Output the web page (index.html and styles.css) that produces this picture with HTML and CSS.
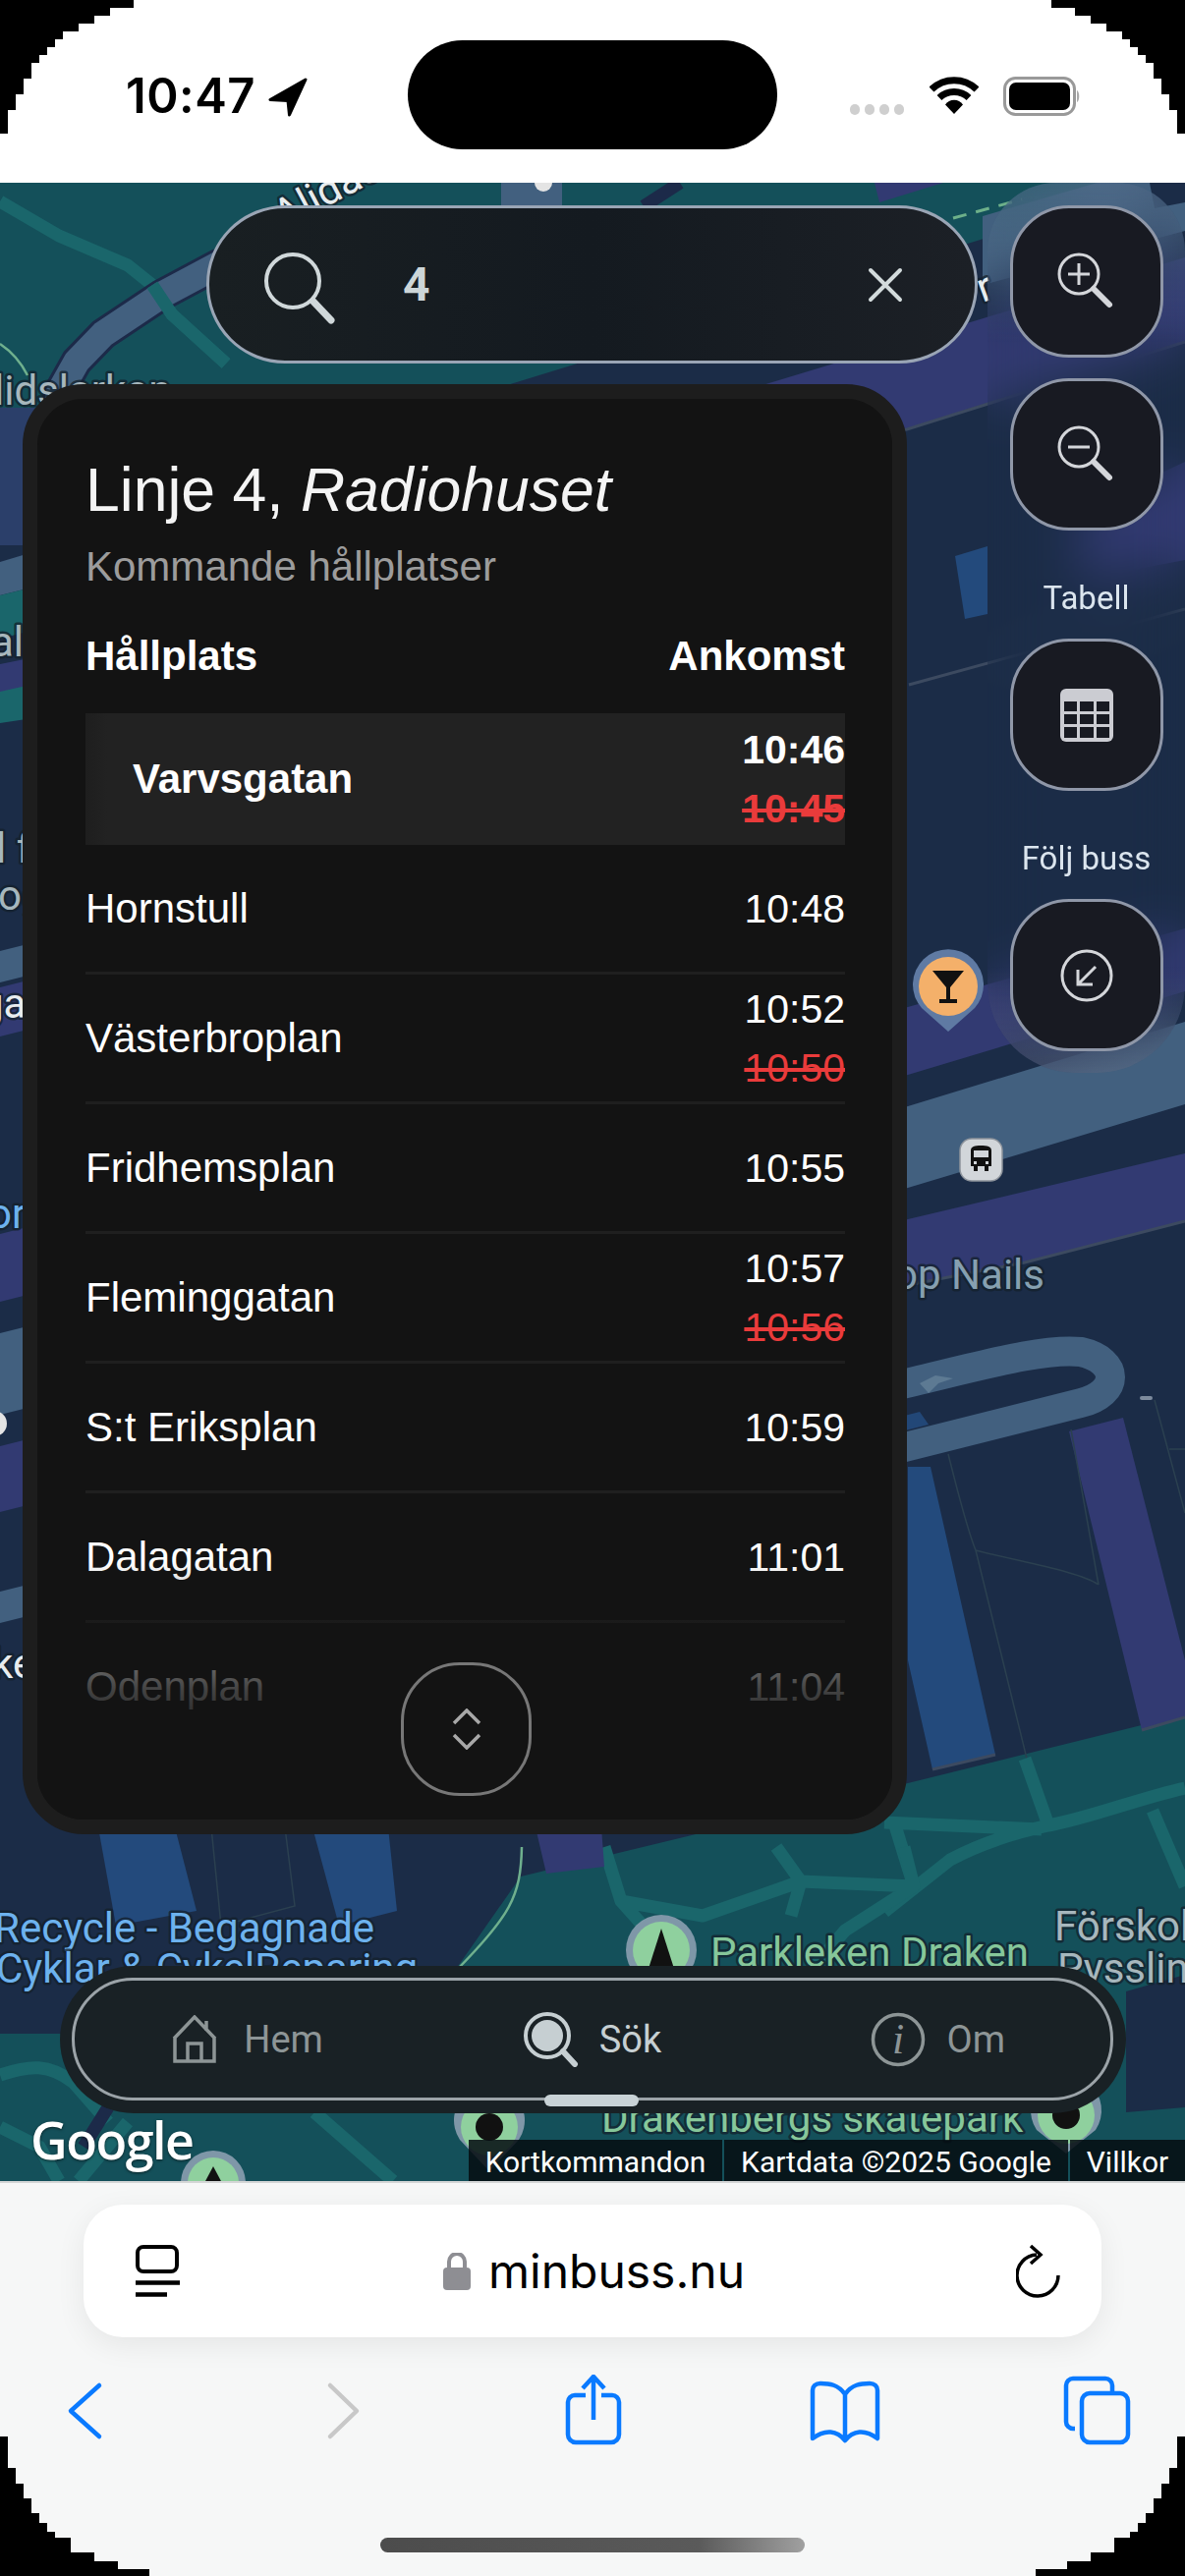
FILE: index.html
```html
<!DOCTYPE html>
<html lang="sv">
<head>
<meta charset="utf-8">
<title>Min Buss</title>
<link rel="stylesheet" href="styles.css">
</head>
<body>
<div class="phone">
  <header class="status">
    <div class="status-left">
      <span class="clock">10:47</span>
      <svg class="loc" width="40" height="40" viewBox="0 0 40 40"><path d="M38 2 2 22.5 20 23.500 21.500 38Z" fill="#000" stroke="#000" stroke-width="3" stroke-linejoin="round"/></svg>
    </div>
    <div class="island"></div>
    <div class="status-right">
      <div class="dots"><i></i><i></i><i></i><i></i></div>
      <svg class="wifi" width="50" height="38" viewBox="0 0 50 38"><path d="M2 13A33 33 0 0 1 48 13" fill="none" stroke="#000" stroke-width="7"/><path d="M10 21.500A22 22 0 0 1 40 21.500" fill="none" stroke="#000" stroke-width="7"/><path d="M16 28.500A11 11 0 0 1 34 28.500L25 38Z" fill="#000"/></svg>
      <svg class="batt" width="80" height="40" viewBox="0 0 80 40"><rect x="1.500" y="1.500" width="71" height="37" rx="11" fill="none" stroke="#999" stroke-width="3"/><rect x="6" y="6" width="62" height="28" rx="7" fill="#000"/><path d="M75 14C78 15 78 25 75 26Z" fill="#aaa"/></svg>
    </div>
  </header>

  <main class="map">
    <svg class="map-art" width="1206" height="2034" viewBox="0 186 1206 2034">
      <rect class="f-park" x="0" y="186" width="1206" height="2034"/>
      <polygon class="f-navy" points="0,420 490,400 1206,180 1206,1745 924,1815 530,1910 460,2010 430,2070 0,2070"/>
      <polygon class="f-navy" points="1146,2027 1206,2010 1206,2145 1146,2150"/>
      <polygon class="f-purple" points="890,186 960,186 895,206"/>
      <polygon class="f-hatch" points="0,415 60,415 40,555 0,555"/>
      <polygon class="f-road" points="0,572 40,560 40,596 0,606"/>
      <polygon class="f-path" points="0,606 40,596 40,640 0,650"/>
      <polygon class="f-purple" points="0,676 40,668 40,700 0,712"/>
      <polygon class="f-path" points="0,704 40,695 40,730 0,736"/>
      <polygon class="f-road" points="0,968 40,958 40,990 0,1000"/>
      <polygon class="f-purple" points="0,1005 40,995 40,1045 0,1055"/>
      <path class="s-path" d="M0 205 60 240 130 270 155 290 175 320 230 370"/>
      <path class="s-road-edge" d="M40 560 60 400 78 368 105 340 165 300 225 268"/>
      <path class="s-road" d="M40 560 60 400 78 368 105 340 165 300 225 268"/>
      <path class="s-path" d="M155 290 175 320 230 370"/>
      <path class="s-thin" d="M0 350C12 358 22 370 28 382"/>
      <rect class="f-road" x="510" y="186" width="62" height="24"/>
      <path class="s-dark" d="M692 186 655 210"/>
      <circle class="f-white" cx="553" cy="186" r="9"/>
      <text class="lbl lbl-white" transform="translate(288 234) rotate(-28)">Alidas</text>
      <path class="s-dash" d="M970 222 1040 203"/>
      <polygon class="f-road" points="1000,220 1206,160 1206,235 1000,290"/>
      <polygon class="f-navy" points="1170,186 1206,186 1206,206 1175,212"/>
      <polygon class="f-purple" points="650,430 1206,262 1206,347 923,436 700,470"/>
      <polygon class="f-purple" points="1100,520 1206,470 1206,570 1100,590"/>
      <path class="s-edge" d="M700 470 923 437 1206 348"/>
      <polygon class="f-blue" points="972,566 1005,556 1005,625 982,630"/>
      <path class="s-edge" d="M925 697 1206 620"/>
      <polygon class="f-purple" points="0,1256 924,1025 1206,945 1206,1009 924,1094 0,1325"/>
      <polygon class="f-road" points="0,1357 924,1126 1206,1040 1206,1124 924,1209 0,1440"/>
      <polygon class="f-purple" points="0,1472 924,1241 1206,1174 1206,1243 1043,1285 924,1308 0,1539"/>
      <path class="s-edge" d="M924 1308 1043 1285 1206 1243"/>
      <polygon class="f-road" points="0,1620 40,1610 40,1642 0,1652"/>
      <path class="s-uroad" d="M905 1477 1100 1428C1140 1418 1140 1385 1100 1376 1060 1372 1000 1390 905 1412"/>
      <polygon class="f-blue" points="905,1445 936,1437 945,1450 905,1460" opacity=".9"/>
      <polygon class="f-blue" points="924,1493 947,1493 1013,1786 949,1801 924,1690"/>
      <path class="s-edge" d="M949 1801 1013 1786"/>
      <polygon class="f-purple" points="1088,1457 1143,1443 1206,1690 1206,1747 1162,1761"/>
      <path class="s-edge" d="M1162 1761 1206 1748"/>
      <path class="s-faint" d="M965 1480C985 1560 990 1570 993 1578 1040 1590 1100 1600 1118 1613M993 1578 1045 1790M1090 1455 1118 1613M1175 1425 1206 1540M1190 1475H1206"/>
      <rect class="f-pale" x="1160" y="1421" width="13" height="4" rx="2"/>
      <polygon class="f-pale2" points="936,1408 952,1400 970,1403 955,1408 945,1418"/>
      <!-- park paths -->
      <path class="s-path" d="M900 1946 967 1893C1000 1875 1035 1865 1067 1858 1110 1850 1160 1830 1206 1820M1043 1790 1067 1858M1173 1843 1206 1920M900 1855 1060 1862M910 1855 930 1920"/>
      <path class="s-path" d="M615 1880 632 1935 690 2000M790 1880 815 1915 805 1950M920 1880 930 1920 860 1965 830 2000M632 1935 715 1950 815 1915 930 1920"/>
      <path class="s-path" d="M0 2112C30 2102 50 2100 75 2120L110 2160M0 2165 40 2185 60 2220M320 2150 400 2220M130 2160 80 2220"/>
      <path class="s-dark" d="M110 2145 85 2185"/>
      <path class="s-thin" d="M531 1880C530 1930 520 1950 460 2010"/>
      <!-- buildings -->
      <polygon class="f-blue" points="100,1860 178,1860 200,1945 118,1960"/>
      <polygon class="f-blue" points="318,1860 395,1860 404,1945 345,1960"/>
      <polygon class="f-purple" points="545,1860 612,1860 615,1900 556,1907"/>
      <path class="s-faint" d="M215 1860 225 1960 300 1940 290 1860"/>
      <!-- pins -->
      <g>
        <path class="f-halo" d="M965 1050 938 1026A36 36 0 1 1 992 1026Z"/>
        <circle class="f-orange" cx="965" cy="1004" r="30"/>
        <path class="f-ink" d="M949 988H981L967 1005V1017H974V1021H956V1017H963V1005Z"/>
      </g>
      <g>
        <rect class="f-chip" x="977" y="1159" width="43" height="43" rx="12"/>
        <path class="f-ink" d="M988 1171C988 1167 992 1166 998 1166 1005 1166 1009 1167 1009 1171V1187H1006V1192H1002V1187H995V1192H991V1187H988ZM991 1171V1178H1006V1171ZM991 1182V1185H994V1182ZM1003 1182V1185H1006V1182Z" fill-rule="evenodd"/>
      </g>
      <g>
        <circle class="f-halo2" cx="673" cy="1985" r="36"/><circle class="f-green" cx="673" cy="1985" r="29"/>
        <path class="f-ink" d="M673 1963 688 2010H658Z"/>
      </g>
      <g>
        <path class="f-halo2" d="M498 2210 468 2178A36 36 0 1 1 528 2178Z"/>
        <circle class="f-green" cx="498" cy="2165" r="29"/><circle class="f-ink" cx="498" cy="2165" r="14"/>
      </g>
      <g>
        <path class="f-halo2" d="M1085 2192 1055 2168A36 36 0 1 1 1115 2168Z"/>
        <circle class="f-green" cx="1085" cy="2153" r="29"/><circle class="f-ink" cx="1085" cy="2153" r="14"/>
      </g>
      <g>
        <circle class="f-halo2" cx="217" cy="2222" r="33"/><circle class="f-green" cx="217" cy="2222" r="26"/>
        <path class="f-ink" d="M217 2205 226 2222H208Z"/>
      </g>
      <!-- labels -->
      <text class="lbl lbl-grey" x="-6" y="412">lidslarkan</text>
      <text class="lbl lbl-grey" x="-9" y="668">al</text>
      <text class="lbl lbl-grey" x="-4" y="878">l f</text>
      <text class="lbl lbl-grey" x="-2" y="926">og</text>
      <text class="lbl lbl-white" x="-20" y="1036">ga</text>
      <text class="lbl lbl-blue" x="-12" y="1250">or</text>
      <circle class="f-white" cx="-6" cy="1449" r="13"/>
      <text class="lbl lbl-white" x="-8" y="1708">ke</text>
      <text class="lbl lbl-dim" x="1063" y="1312" text-anchor="end">Top Nails</text>
      <text class="lbl lbl-grey" x="1073" y="1975">Förskola</text>
      <text class="lbl lbl-grey" x="1076" y="2018">Pysslingen</text>
      <text class="lbl lbl-blue" x="-6" y="1977">Recycle - Begagnade</text>
      <text class="lbl lbl-blue" x="-4" y="2018">Cyklar &amp; CykelReparing</text>
      <text class="lbl lbl-green" x="723" y="2002">Parkleken Draken</text>
      <text class="lbl lbl-green" x="612" y="2170">Drakenbergs skatepark</text>
      <text class="lbl lbl-white" x="1000" y="308" transform="rotate(-20 1000 308)">r</text>
    </svg>

    <div class="search">
      <svg class="search-ico" width="74" height="74" viewBox="0 0 74 74"><circle cx="30" cy="30" r="27" fill="none" stroke="#d0d8da" stroke-width="4"/><path d="M51 51 69 70" stroke="#d0d8da" stroke-width="7" stroke-linecap="round"/></svg>
      <span class="search-val">4</span>
      <svg class="search-x" width="36" height="36" viewBox="0 0 36 36"><path d="M3 3 33 33M33 3 3 33" stroke="#d3dbdc" stroke-width="4" stroke-linecap="round"/></svg>
    </div>

    <aside class="tools">
      <button class="tool"><svg width="60" height="60" viewBox="0 0 60 60"><circle cx="22" cy="22" r="20" fill="none" stroke="#d4d6da" stroke-width="3"/><path d="M22 11V33M11 22H33" stroke="#d4d6da" stroke-width="3"/><path d="M37 37 53 53" stroke="#d4d6da" stroke-width="6" stroke-linecap="round"/></svg></button>
      <button class="tool tool-gap"><svg width="60" height="60" viewBox="0 0 60 60"><circle cx="22" cy="22" r="20" fill="none" stroke="#d4d6da" stroke-width="3"/><path d="M11 22H33" stroke="#d4d6da" stroke-width="3"/><path d="M37 37 53 53" stroke="#d4d6da" stroke-width="6" stroke-linecap="round"/></svg></button>
      <div class="tool-label">Tabell</div>
      <button class="tool"><svg width="54" height="54" viewBox="0 0 54 54"><rect width="54" height="54" rx="6" fill="#cbccd2"/><g fill="#181a22"><rect x="4" y="13" width="13" height="10"/><rect x="20" y="13" width="14" height="10"/><rect x="37" y="13" width="13" height="10"/><rect x="4" y="26" width="13" height="10"/><rect x="20" y="26" width="14" height="10"/><rect x="37" y="26" width="13" height="10"/><rect x="4" y="39" width="13" height="11"/><rect x="20" y="39" width="14" height="11"/><rect x="37" y="39" width="13" height="11"/></g></svg></button>
      <div class="tool-label">Följ buss</div>
      <button class="tool"><svg width="54" height="54" viewBox="0 0 54 54"><circle cx="27" cy="27" r="25" fill="none" stroke="#d4d6da" stroke-width="3"/><path d="M36 18 19 35M18 21V36H33" fill="none" stroke="#d4d6da" stroke-width="3"/></svg></button>
    </aside>

    <section class="card">
      <h1 class="card-title">Linje 4, <em>Radiohuset</em></h1>
      <p class="card-sub">Kommande hållplatser</p>
      <div class="card-head"><span>Hållplats</span><span>Ankomst</span></div>
      <ul class="stops">
        <li class="stop stop-now"><span>Varvsgatan</span><span class="times"><span>10:46</span><s>10:45</s></span></li>
        <li class="stop"><span>Hornstull</span><span class="times"><span>10:48</span></span></li>
        <li class="stop"><span>Västerbroplan</span><span class="times"><span>10:52</span><s>10:50</s></span></li>
        <li class="stop"><span>Fridhemsplan</span><span class="times"><span>10:55</span></span></li>
        <li class="stop"><span>Fleminggatan</span><span class="times"><span>10:57</span><s>10:56</s></span></li>
        <li class="stop"><span>S:t Eriksplan</span><span class="times"><span>10:59</span></span></li>
        <li class="stop"><span>Dalagatan</span><span class="times"><span>11:01</span></span></li>
        <li class="stop"><span>Odenplan</span><span class="times"><span>11:04</span></span></li>
      </ul>
      <div class="fade"></div>
      <button class="scroll"><svg width="30" height="42" viewBox="0 0 30 42"><path d="M2 15 15 2 28 15M2 27 15 40 28 27" fill="none" stroke="#a8a8a8" stroke-width="3.500"/></svg></button>
    </section>

    <nav class="nav">
      <div class="nav-inner">
        <a class="nav-item">
          <svg width="48" height="50" viewBox="0 0 48 50"><path d="M3 24 24 2 45 24M4 23V47H44V23M17 47V29H31V47M36 6V16" fill="none" stroke="#8d9596" stroke-width="3.500"/></svg>
          <span>Hem</span>
        </a>
        <a class="nav-item nav-on">
          <svg width="56" height="56" viewBox="0 0 56 56"><circle cx="24" cy="24" r="22" fill="none" stroke="#c6cfd2" stroke-width="4"/><circle cx="24" cy="24" r="16" fill="#c6cfd2"/><path d="M40 40 52 53" stroke="#c6cfd2" stroke-width="6" stroke-linecap="round"/></svg>
          <span>Sök</span>
        </a>
        <a class="nav-item nav-om">
          <svg width="56" height="56" viewBox="0 0 56 56"><circle cx="28" cy="28" r="25.500" fill="none" stroke="#8d9596" stroke-width="3.500"/><text class="info-i" x="28" y="42" text-anchor="middle">i</text></svg>
          <span>Om</span>
        </a>
        <div class="nav-pill"></div>
      </div>
    </nav>

    <div class="google">Google</div>
    <div class="attrib"><span class="a1">Kortkommandon</span><span class="a2">Kartdata ©2025 Google</span><span class="a3">Villkor</span></div>
  </main>

  <footer class="safari">
    <div class="url">
      <svg width="46" height="54" viewBox="0 0 46 54"><rect x="3" y="2" width="40" height="25" rx="6" fill="none" stroke="#000" stroke-width="4"/><path d="M1 38.500H46M1 50.500H33" stroke="#000" stroke-width="4.500"/></svg>
      <div class="url-mid">
        <svg width="28" height="38" viewBox="0 0 28 38"><path d="M6 16V9A8 8 0 0 1 22 9V16" fill="none" stroke="#8e8e93" stroke-width="4"/><rect y="15" width="28" height="23" rx="4" fill="#8e8e93"/></svg>
        <span>minbuss.nu</span>
      </div>
      <svg width="46" height="56" viewBox="0 0 46 56"><path d="M21 11A21 21 0 1 0 43 32" fill="none" stroke="#000" stroke-width="3.500"/><path d="M15 2 25 11 15 20" fill="none" stroke="#000" stroke-width="3.500"/></svg>
    </div>
    <div class="toolbar">
      <svg width="80" height="72" viewBox="0 0 80 72"><path d="M55 11 26 37 55 63" fill="none" stroke="#0a7aff" stroke-width="4.500" stroke-linecap="round" stroke-linejoin="round"/></svg>
      <svg width="80" height="72" viewBox="0 0 80 72"><path d="M26 11 53 37 26 63" fill="none" stroke="#c8c8c8" stroke-width="4.500" stroke-linecap="round" stroke-linejoin="round"/></svg>
      <svg width="80" height="72" viewBox="0 0 80 72"><path d="M32 21H21A7 7 0 0 0 14 28V61A8 8 0 0 0 22 69H58A8 8 0 0 0 66 61V28A7 7 0 0 0 59 21H48M40 46V2M29 14 40 2 51 14" fill="none" stroke="#0a7aff" stroke-width="4.500"/></svg>
      <svg width="80" height="72" viewBox="0 0 80 72"><path d="M40 20C33 10 24 9 15 9 10 9 7 12 7 16V65C20 55 32 57 40 67 48 57 60 55 73 65V16C73 12 70 9 65 9 56 9 47 10 40 20ZM40 20V67" fill="none" stroke="#0a7aff" stroke-width="4.500" stroke-linejoin="round"/></svg>
      <svg width="80" height="72" viewBox="0 0 80 72"><path d="M14 55H12A7 7 0 0 1 5 48V11A7 7 0 0 1 12 4H45A7 7 0 0 1 52 11V19" fill="none" stroke="#0a7aff" stroke-width="4.500"/><rect x="21" y="19" width="47" height="50" rx="8" fill="none" stroke="#0a7aff" stroke-width="4.500"/></svg>
    </div>
    <div class="homebar"></div>
  </footer>

  <svg class="corners" width="1206" height="2622" viewBox="0 0 1206 2622" shape-rendering="crispEdges">
    <path d="M0 0H136V8H112V16H96V24H80V32H64V40H56V48H48V56H40V64H32V80H24V96H16V112H8V136H0Z"/>
    <path d="M0 0H136V8H112V16H96V24H80V32H64V40H56V48H48V56H40V64H32V80H24V96H16V112H8V136H0Z" transform="matrix(-1 0 0 1 1206 0)"/>
    <path d="M0 2622V2480H8V2512H16V2528H24V2543H32V2558H40V2568H48V2577H56V2583H72V2598H96V2607H120V2615H152V2622Z"/>
    <path d="M0 2622V2480H8V2512H16V2528H24V2543H32V2558H40V2568H48V2577H56V2583H72V2598H96V2607H120V2615H152V2622Z" transform="matrix(-1 0 0 1 1206 0)"/>
  </svg>
</div>
</body>
</html>
```
FILE: styles.css
```css
* { box-sizing: border-box; }
html, body { margin: 0; padding: 0; background: #000; }
body { width: 1206px; height: 2622px; overflow: hidden; }
button { padding: 0; font: inherit; color: inherit; background: none; }
ul, h1, p { margin: 0; padding: 0; }
li { list-style: none; }

.phone { position: relative; width: 1206px; height: 2622px; display: flex; flex-direction: column; overflow: hidden; font-family: "Liberation Sans", Arial, sans-serif; }
.corners { position: absolute; left: 0; top: 0; pointer-events: none; fill: #000; }

/* status bar */
.status { height: 186px; flex: none; background: #fff; display: flex; }
.status-left { width: 415px; padding: 73px 0 0 128px; display: flex; align-items: flex-start; gap: 13px; }
.clock { font-family: Inter, sans-serif; font-weight: 600; font-size: 49px; line-height: 50px; letter-spacing: .5px; color: #000; }
.loc { margin-top: 6px; }
.island { width: 376px; height: 111px; margin-top: 41px; border-radius: 56px; background: #000; }
.status-right { flex: 1; padding: 78px 0 0 74px; display: flex; align-items: flex-start; }
.dots { display: flex; gap: 5px; margin-top: 28px; width: 81px; }
.dots i { width: 10px; height: 11px; border-radius: 5px; background: #cfcfcf; }
.batt { margin-left: 24px; width: 82px; }

/* map */
.map { position: relative; flex: none; height: 2034px; overflow: hidden; background: #14505a; }
.map-art { position: absolute; left: 0; top: 0; }
.f-park { fill: #14505a; }
.f-navy { fill: #1b2c47; }
.f-purple { fill: #323a72; }
.f-blue { fill: #234a7c; }
.f-road { fill: #42607f; }
.f-hatch { fill: #2b3f6a; }
.f-path { fill: #1a666b; }
.f-white { fill: #e4e4e4; }
.f-pale { fill: #7d8b9d; }
.f-pale2 { fill: #5d7a93; }
.f-halo { fill: #5f7aa3; }
.f-halo2 { fill: #7f97a8; }
.f-orange { fill: #f4b06a; }
.f-green { fill: #8fd09e; }
.f-ink { fill: #111; }
.f-chip { fill: #d2d6da; stroke: #8e949c; stroke-width: 1.5; }
.s-path { fill: none; stroke: #1a666b; stroke-width: 13; stroke-linejoin: round; }
.s-road { fill: none; stroke: #42607f; stroke-width: 27; stroke-linejoin: round; }
.s-road-edge { fill: none; stroke: #1c2a49; stroke-width: 33; stroke-linejoin: round; }
.s-uroad { fill: none; stroke: #42607f; stroke-width: 30; stroke-linejoin: round; }
.s-thin { fill: none; stroke: #6fb08e; stroke-width: 2.500; }
.s-dark { fill: none; stroke: #1c2a49; stroke-width: 13; }
.s-dash { fill: none; stroke: #6db08a; stroke-width: 3; stroke-dasharray: 14 10; }
.s-edge { fill: none; stroke: #3c4a60; stroke-width: 3; }
.s-faint { fill: none; stroke: #2b4050; stroke-width: 1.500; }
.lbl { font-family: Roboto, sans-serif; font-size: 42px; paint-order: stroke; stroke: #13202c; stroke-width: 5px; stroke-opacity: .75; stroke-linejoin: round; }
.lbl-grey { fill: #a7b7bd; }
.lbl-dim { fill: #86a0b0; }
.lbl-white { fill: #e8ecee; }
.lbl-blue { fill: #6db2ee; }
.lbl-green { fill: #86c79a; }

/* search */
.search { position: absolute; left: 210px; top: 23px; width: 785px; height: 161px; border: 3px solid #9aa5b5; border-radius: 80px; background: linear-gradient(90deg, #191f22, #141a20 50%, #1c2026); display: flex; align-items: center; padding: 0 73px 0 55px; }
.search-ico { margin-top: 6px; }
.search-val { margin-left: 68px; font-family: Roboto, sans-serif; font-weight: 700; font-size: 48px; color: #cdd6d8; }
.search-x { margin-left: auto; }

/* side tools */
.tools { position: absolute; left: 1005px; top: 0; width: 201px; height: 906px; border-radius: 70px 70px 90px 90px; padding-top: 23px; display: flex; flex-direction: column; align-items: center; backdrop-filter: blur(26px); background: linear-gradient(180deg, rgba(90, 115, 145, .45), rgba(90, 115, 145, 0) 18%, rgba(110, 120, 140, 0) 88%, rgba(130, 130, 150, .28)); }
.tool { width: 156px; height: 155px; flex: none; border: 3px solid #8f97a8; border-radius: 60px; background: #181a22; display: flex; align-items: center; justify-content: center; }
.tool-gap { margin-top: 21px; }
.tool-label { height: 110px; padding-top: 49px; text-align: center; font-family: Roboto, sans-serif; font-size: 33px; line-height: 40px; color: #dbe5ee; }

/* card */
.card { position: absolute; left: 23px; top: 205px; width: 900px; height: 1476px; border: 15px solid #1d1d1d; border-radius: 62px; background: #131313; padding: 57px 48px 0 49px; overflow: hidden; color: #fff; }
.card-title { font-weight: 400; font-size: 62.500px; line-height: 70px; color: #f4f4f4; }
.card-sub { margin-top: 19px; font-size: 42px; line-height: 50px; color: #9c9c9c; }
.card-head { margin-top: 41px; display: flex; justify-content: space-between; font-weight: 700; font-size: 42px; line-height: 50px; }
.stops { margin-top: 33px; }
.stop { height: 132px; display: flex; justify-content: space-between; align-items: center; font-size: 42px; line-height: 50px; border-bottom: 3px solid #1f1f1f; }
.stop-now { height: 134px; font-weight: 700; padding-left: 48px; border-bottom: 0; background: linear-gradient(90deg, #1e1e1e, #222 22px); }
.times { display: flex; flex-direction: column; align-items: flex-end; font-size: 41px; line-height: 60px; }
.times s { color: #ea3b3b; }
.fade { position: absolute; left: 0; right: 0; bottom: 0; height: 263px; background: linear-gradient(180deg, rgba(19, 19, 19, 0), rgba(19, 19, 19, .8) 50%, #131313 72%); }
.scroll { position: absolute; left: 370px; top: 1286px; width: 133px; height: 136px; border: 3px solid #777; border-radius: 60px; display: flex; align-items: center; justify-content: center; }

/* nav */
.nav { position: absolute; left: 61px; top: 1815px; width: 1085px; height: 150px; border-radius: 75px; background: #192125; padding: 12px 13px 13px 12px; }
.nav-inner { position: relative; height: 125px; border: 3.500px solid #9ba3a8; border-radius: 62px; display: grid; grid-template-columns: repeat(3, 1fr); }
.nav-item { display: flex; align-items: center; justify-content: center; gap: 26px; padding-top: 1px; font-family: Roboto, sans-serif; font-size: 38px; color: #8d9596; }
.nav-on { color: #c6cfd2; gap: 21px; }
.nav-om { gap: 22px; }
.info-i { font-family: "Liberation Serif", serif; font-style: italic; font-size: 44px; fill: #8d9596; }
.nav-pill { position: absolute; left: 478px; bottom: -9px; width: 96px; height: 12px; border-radius: 6px; background: #c8d2d6; }

/* attribution */
.google { position: absolute; left: 31px; top: 1960px; font-family: "Open Sans", sans-serif; font-weight: 600; font-size: 52px; line-height: 64px; letter-spacing: -1.500px; color: #fff; text-shadow: 0 1px 3px rgba(0, 0, 0, .6); }
.attrib { position: absolute; right: 0; bottom: 0; height: 42px; display: flex; gap: 2px; font-family: Roboto, sans-serif; font-size: 30px; line-height: 45px; color: #fff; }
.attrib span { background: rgba(5, 12, 16, .85); text-align: center; }
.a1 { width: 258px; }
.a2 { width: 350px; }
.a3 { width: 117px; }

/* safari */
.safari { flex: 1; background: #f6f7f7; border-top: 2px solid #d4d6d6; padding-top: 22px; display: flex; flex-direction: column; align-items: center; }
.url { width: 1036px; height: 135px; flex: none; border-radius: 40px; background: #fff; box-shadow: 0 8px 30px rgba(0, 0, 0, .07); display: flex; align-items: center; justify-content: space-between; padding: 0 41px 0 52px; }
.url-mid { display: flex; align-items: center; gap: 18px; margin-left: -8px; font-family: Inter, sans-serif; font-size: 48px; line-height: 56px; color: #000; }
.toolbar { align-self: stretch; margin-top: 38px; padding-left: 46px; display: grid; grid-template-columns: 264px 254px 256px 260px 80px; }
.homebar { margin-top: 94px; width: 432px; height: 15px; border-radius: 8px; background: linear-gradient(90deg, #4c4c4c, #5a5a5a 75%, #a0a0a0); }
```
